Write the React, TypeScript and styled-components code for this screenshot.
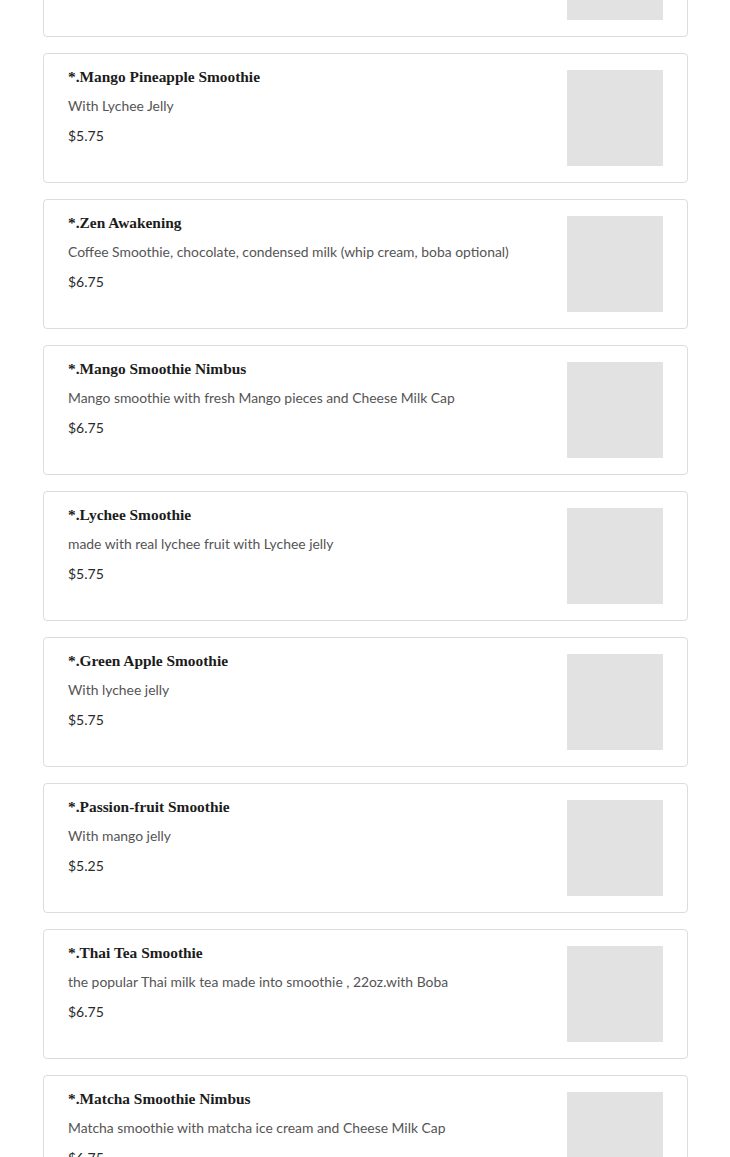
import React from "react";
import styled, { createGlobalStyle } from "styled-components";

const Global = createGlobalStyle`
  html, body { margin: 0; padding: 0; background: #ffffff; }
  body { overflow: hidden; }
`;

const Page = styled.div`
  padding: 0 42px 0 43px;
  overflow: hidden;
  height: 1157px;
`;

const List = styled.div`
  display: flex;
  flex-direction: column;
  gap: 16px;
  margin-top: -93px;
`;

const Card = styled.div`
  display: flex;
  align-items: flex-start;
  gap: 24px;
  height: 130px;
  box-sizing: border-box;
  padding: 16px 24px;
  border: 1px solid #dcdcdc;
  border-radius: 4px;
  background: #fff;
`;

const Info = styled.div`
  flex: 1;
  min-width: 0;
  display: flex;
  flex-direction: column;
`;

const Title = styled.h3`
  margin: 0 0 12px;
  font-family: "Liberation Serif", "DejaVu Serif", serif;
  font-weight: 700;
  font-size: 15.4px;
  line-height: 14px;
  color: #1c1c1c;
`;

const Desc = styled.p`
  margin: 0 0 10px;
  font-family: Lato, "Liberation Sans", sans-serif;
  font-size: 13.9px;
  line-height: 20px;
  color: #555555;
`;

const Price = styled.span`
  font-family: Lato, "Liberation Sans", sans-serif;
  font-size: 14px;
  line-height: 20px;
  color: #2a2a2a;
`;

const Thumb = styled.div`
  flex: 0 0 96px;
  width: 96px;
  height: 96px;
  background: #e2e2e2;
`;

const items = [
  { title: "*.Strawberry Smoothie", desc: "With Lychee Jelly", price: "$5.75" },
  { title: "*.Mango Pineapple Smoothie", desc: "With Lychee Jelly", price: "$5.75" },
  {
    title: "*.Zen Awakening",
    desc: "Coffee Smoothie, chocolate, condensed milk (whip cream, boba optional)",
    price: "$6.75",
  },
  {
    title: "*.Mango Smoothie Nimbus",
    desc: "Mango smoothie with fresh Mango pieces and Cheese Milk Cap",
    price: "$6.75",
  },
  { title: "*.Lychee Smoothie", desc: "made with real lychee fruit with Lychee jelly", price: "$5.75" },
  { title: "*.Green Apple Smoothie", desc: "With lychee jelly", price: "$5.75" },
  { title: "*.Passion-fruit Smoothie", desc: "With mango jelly", price: "$5.25" },
  {
    title: "*.Thai Tea Smoothie",
    desc: "the popular Thai milk tea made into smoothie , 22oz.with Boba",
    price: "$6.75",
  },
  {
    title: "*.Matcha Smoothie Nimbus",
    desc: "Matcha smoothie with matcha ice cream and Cheese Milk Cap",
    price: "$6.75",
  },
];

export default function App() {
  return (
    <>
      <Global />
      <Page>
        <List>
          {items.map((it, i) => (
            <Card key={i}>
              <Info>
                <Title>{it.title}</Title>
                <Desc>{it.desc}</Desc>
                <Price>{it.price}</Price>
              </Info>
              <Thumb />
            </Card>
          ))}
        </List>
      </Page>
    </>
  );
}
